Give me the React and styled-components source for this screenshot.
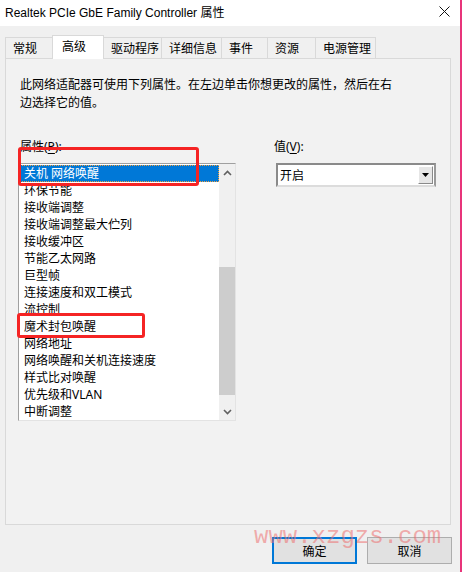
import React from 'react';
import styled, { createGlobalStyle } from 'styled-components';

const GlobalStyle = createGlobalStyle`
  html, body {
    margin: 0;
    padding: 0;
    background: #ffffff;
  }

  body {
    font-family: 'Noto Sans', 'Noto Sans CJK SC', sans-serif;
    font-size: 12px;
    color: #000000;
  }
`;

const Window = styled.div`
  position: relative;

  display: flex;
  flex-direction: column;

  width: 462px;
  height: 572px;
  box-sizing: border-box;
  border-right: 2px solid #e8347a;
  background: #f0f0f0;
  overflow: hidden;
`;

const TitleBar = styled.div`
  display: flex;
  align-items: center;
  justify-content: space-between;

  height: 26px;
  padding: 0 10px 4px 5px;
  box-sizing: border-box;
  background: #ffffff;
  font-family: 'Liberation Sans', 'Noto Sans CJK SC', sans-serif;
  font-size: 12px;
`;

const CloseIcon = () => (
  <svg width="11" height="11" viewBox="0 0 11 11">
    <path d="M0.5 0.5 L10.5 10.5 M10.5 0.5 L0.5 10.5" stroke="#111" strokeWidth="1" fill="none" />
  </svg>
);

const Body = styled.div`
  display: flex;
  flex-direction: column;
  flex: 1;

  padding: 9px 0 0 5px;
`;

const TabBar = styled.div`
  display: flex;
  align-items: flex-end;

  height: 23px;
`;

const Tab = styled.div`
  position: relative;
  z-index: ${(p) => (p.$active ? 2 : 1)};

  display: flex;
  align-items: center;

  width: ${(p) => p.$w}px;
  height: ${(p) => (p.$active ? 24 : 21)}px;
  margin-bottom: ${(p) => (p.$active ? -1 : 0)}px;
  margin-right: -1px;
  padding: ${(p) => (p.$active ? '0 0 3px 9px' : '0 0 0 7px')};
  box-sizing: border-box;
  border: 1px solid #d9d9d9;
  border-bottom: none;
  background: ${(p) => (p.$active ? '#ffffff' : '#f0f0f0')};
  white-space: nowrap;
`;

const Panel = styled.div`
  display: flex;
  flex-direction: column;

  width: 446px;
  height: 467px;
  padding: 17px 0 0 14px;
  box-sizing: border-box;
  border: 1px solid #d9d9d9;
  background: #f2f2f2;
`;

const Description = styled.p`
  width: 380px;
  margin: 0;
  line-height: 18px;
`;

const Fields = styled.div`
  display: flex;
  margin-top: 27px;
`;

const LeftCol = styled.div`
  display: flex;
  flex-direction: column;

  width: 218px;
  margin-left: -2px;
`;

const RightCol = styled.div`
  display: flex;
  flex-direction: column;

  margin-left: 36px;
`;

const Label = styled.div`
  height: 16px;
  margin-bottom: 8px;
  padding-left: 2px;
  line-height: 16px;

  u {
    text-decoration: underline;
    text-underline-offset: 2px;
  }
`;

const ListBox = styled.div`
  display: flex;

  height: 258px;
  box-sizing: border-box;
  border: 1px solid;
  border-color: #a0a0a0 #e3e3e3 #e3e3e3 #a0a0a0;
  background: #ffffff;
`;

const Items = styled.div`
  display: flex;
  flex-direction: column;
  flex: 1;

  padding-top: 1px;
`;

const Item = styled.div`
  height: 17px;
  padding-left: 5px;
  box-sizing: border-box;
  line-height: 17px;
  white-space: nowrap;
  color: ${(p) => (p.$selected ? '#ffffff' : '#000000')};
  background: ${(p) => (p.$selected ? '#0078d7' : 'transparent')};
  outline: ${(p) => (p.$selected ? '1px dotted #f0a040' : 'none')};
  outline-offset: -1px;
`;

const Scrollbar = styled.div`
  display: flex;
  flex-direction: column;

  width: 16px;
  background: #f0f0f0;
`;

const ScrollButton = styled.div`
  display: flex;
  align-items: center;
  justify-content: center;

  height: 17px;
`;

const Track = styled.div`
  display: flex;
  flex-direction: column;
  flex: 1;

  padding: ${(p) => p.$before}px 0 ${(p) => p.$after}px;
`;

const Thumb = styled.div`
  flex: 1;
  background: #cdcdcd;
`;

const Chevron = ({ down }) => (
  <svg width="9" height="6" viewBox="0 0 9 6">
    <path
      d={down ? 'M1 1 L4.5 4.5 L8 1' : 'M1 5 L4.5 1.5 L8 5'}
      stroke="#606060"
      strokeWidth="1.6"
      fill="none"
    />
  </svg>
);

const Select = styled.div`
  display: flex;
  align-items: center;
  justify-content: space-between;

  width: 160px;
  height: 24px;
  margin-left: 4px;
  padding: 0 1px 0 2px;
  box-sizing: border-box;
  border: 2px solid;
  border-color: #8a8a8a #9a9a9a #dcdcdc #8a8a8a;
  background: #ffffff;
`;

const DropButton = styled.div`
  display: flex;
  align-items: center;
  justify-content: center;

  width: 15px;
  height: 18px;
  box-sizing: border-box;
  border: 1px solid;
  border-color: #ffffff #8a8a8a #8a8a8a #ffffff;
  background: #e6e6e6;
`;

const ButtonRow = styled.div`
  display: flex;
  justify-content: flex-end;
  gap: 10px;

  margin-top: 12px;
  padding-right: 8px;
`;

const Button = styled.div`
  display: flex;
  align-items: center;
  justify-content: center;

  width: 85px;
  height: 27px;
  box-sizing: border-box;
  border: ${(p) => (p.$primary ? '2px solid #0078d7' : '1px solid #adadad')};
  background: #e1e1e1;
`;

const Highlight = styled.div`
  position: absolute;
  z-index: 5;
  left: ${(p) => p.$x}px;
  top: ${(p) => p.$y}px;

  width: ${(p) => p.$w}px;
  height: ${(p) => p.$h}px;
  box-sizing: border-box;
  border: 3px solid #f52424;
  border-radius: 3px;
  pointer-events: none;
`;

const Watermark = styled.div`
  position: absolute;
  z-index: 6;
  left: 254px;
  top: 525px;

  font-family: 'Liberation Mono', monospace;
  font-size: 24px;
  line-height: 24px;
  color: rgba(238, 110, 110, 0.55);
  pointer-events: none;
`;

const tabs = [
  { label: '常规', w: 48 },
  { label: '高级', w: 52, active: true },
  { label: '驱动程序', w: 59 },
  { label: '详细信息', w: 61 },
  { label: '事件', w: 47 },
  { label: '资源', w: 49 },
  { label: '电源管理', w: 61 },
];

const properties = [
  '关机 网络唤醒',
  '环保节能',
  '接收端调整',
  '接收端调整最大伫列',
  '接收缓冲区',
  '节能乙太网路',
  '巨型帧',
  '连接速度和双工模式',
  '流控制',
  '魔术封包唤醒',
  '网络地址',
  '网络唤醒和关机连接速度',
  '样式比对唤醒',
  '优先级和VLAN',
  '中断调整',
];

const App = () => (
  <>
    <GlobalStyle />
    <Window>
      <TitleBar>
        <span>Realtek PCIe GbE Family Controller 属性</span>
        <CloseIcon />
      </TitleBar>
      <Body>
        <TabBar>
          {tabs.map((t) => (
            <Tab key={t.label} $w={t.w} $active={t.active}>
              {t.label}
            </Tab>
          ))}
        </TabBar>
        <Panel>
          <Description>
            此网络适配器可使用下列属性。在左边单击你想更改的属性，然后在右边选择它的值。
          </Description>
          <Fields>
            <LeftCol>
              <Label>
                属性(<u>P</u>):
              </Label>
              <ListBox>
                <Items>
                  {properties.map((p, i) => (
                    <Item key={p} $selected={i === 0}>
                      {p}
                    </Item>
                  ))}
                </Items>
                <Scrollbar>
                  <ScrollButton>
                    <Chevron />
                  </ScrollButton>
                  <Track $before={86} $after={8}>
                    <Thumb />
                  </Track>
                  <ScrollButton>
                    <Chevron down />
                  </ScrollButton>
                </Scrollbar>
              </ListBox>
            </LeftCol>
            <RightCol>
              <Label>
                值(<u>V</u>):
              </Label>
              <Select>
                <span>开启</span>
                <DropButton>
                  <svg width="7" height="4" viewBox="0 0 7 4">
                    <path d="M0 0 H7 L3.5 4 Z" fill="#000" />
                  </svg>
                </DropButton>
              </Select>
            </RightCol>
          </Fields>
        </Panel>
        <ButtonRow>
          <Button $primary>确定</Button>
          <Button>取消</Button>
        </ButtonRow>
      </Body>
      <Highlight $x={18} $y={147} $w={181} $h={39} />
      <Highlight $x={17} $y={313} $w={128} $h={25} />
      <Watermark>www.xzgzs.com</Watermark>
    </Window>
  </>
);

export default App;
